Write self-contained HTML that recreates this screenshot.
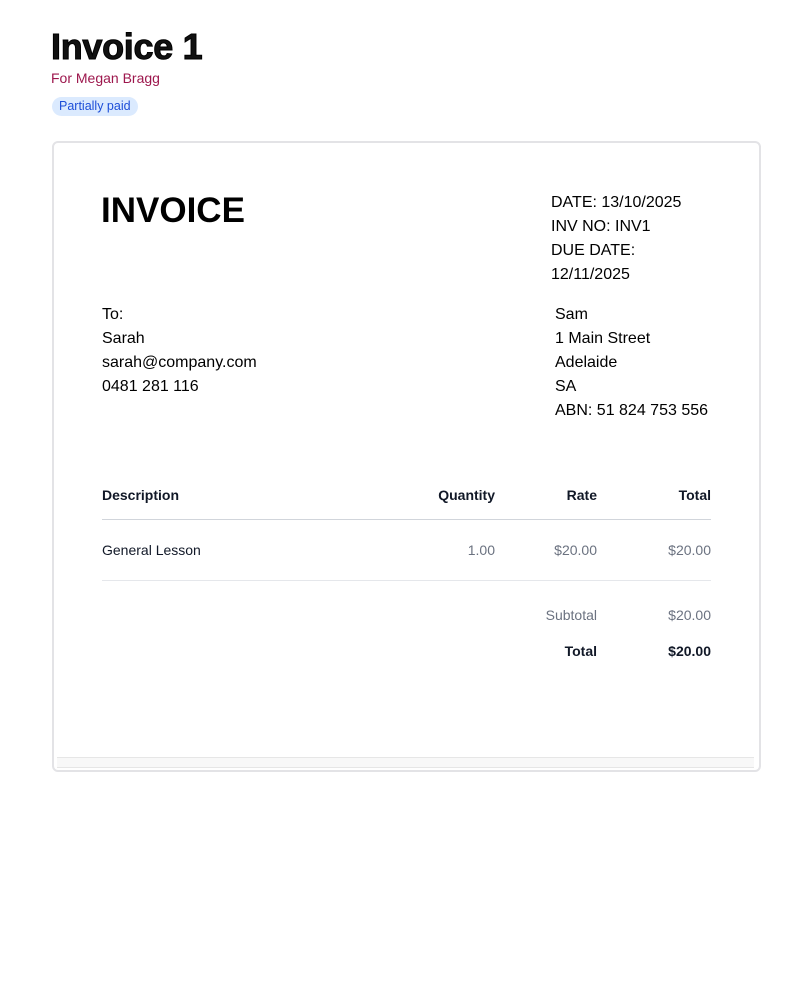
<!DOCTYPE html>
<html><head><style>
body{margin:0;background:#fff;font-family:"Liberation Sans",Arial,sans-serif;color:#111;width:790px;height:1000px;position:relative;overflow:hidden}
.a{position:absolute;white-space:nowrap}
h1{position:absolute;left:51px;top:26px;margin:0;font-size:36px;font-weight:900;letter-spacing:-0.3px;line-height:42px;-webkit-text-stroke:1px #000}
.card{position:absolute;left:52px;top:141px;width:705px;height:627px;border:2px solid #e3e3e6;border-radius:6px}
.bar{position:absolute;left:3px;top:614px;width:697px;height:9px;background:#f8f8f8;border-top:1px solid #e6e6e6;border-bottom:1px solid #e6e6e6}
.t{font-size:16px;line-height:24px;color:#000}
.s{font-size:14px;color:#111827}
.g{font-size:14px;color:#6b7280}
.r{text-align:right}
.hr{position:absolute;left:102px;width:609px;height:1px}
</style></head><body>
<h1>Invoice 1</h1>
<div class="a" style="left:51px;top:70px;font-size:14px;color:#9d174d">For Megan Bragg</div>
<div class="a" style="left:52px;top:97px;font-size:12.5px;line-height:19px;padding:0 7px;background:#dbeafe;color:#1d4ed8;border-radius:10px">Partially paid</div>
<div class="card"><div class="bar"></div></div>
<div class="a" style="left:101px;top:191px;font-size:35px;font-weight:700;color:#000">INVOICE</div>
<div class="a t" style="left:551px;top:191px">DATE: 13/10/2025<br>INV NO: INV1<br>DUE DATE:<br>12/11/2025</div>
<div class="a t" style="left:102px;top:303px">To:<br>Sarah<br>sarah@company.com<br>0481 281 116</div>
<div class="a t" style="left:555px;top:303px">Sam<br>1 Main Street<br>Adelaide<br>SA<br>ABN: 51 824 753 556</div>
<div class="a s" style="left:102px;top:487px;font-weight:700">Description</div>
<div class="a s r" style="right:295px;top:487px;font-weight:700">Quantity</div>
<div class="a s r" style="right:193px;top:487px;font-weight:700">Rate</div>
<div class="a s r" style="right:79px;top:487px;font-weight:700">Total</div>
<div class="hr" style="top:519px;background:#d1d5db"></div>
<div class="a s" style="left:102px;top:542px">General Lesson</div>
<div class="a g" style="right:295px;top:542px">1.00</div>
<div class="a g" style="right:193px;top:542px">$20.00</div>
<div class="a g" style="right:79px;top:542px">$20.00</div>
<div class="hr" style="top:580px;background:#e5e7eb"></div>
<div class="a g" style="right:193px;top:607px">Subtotal</div>
<div class="a g" style="right:79px;top:607px">$20.00</div>
<div class="a s" style="right:193px;top:643px;font-weight:700">Total</div>
<div class="a s" style="right:79px;top:643px;font-weight:700">$20.00</div>
</body></html>
